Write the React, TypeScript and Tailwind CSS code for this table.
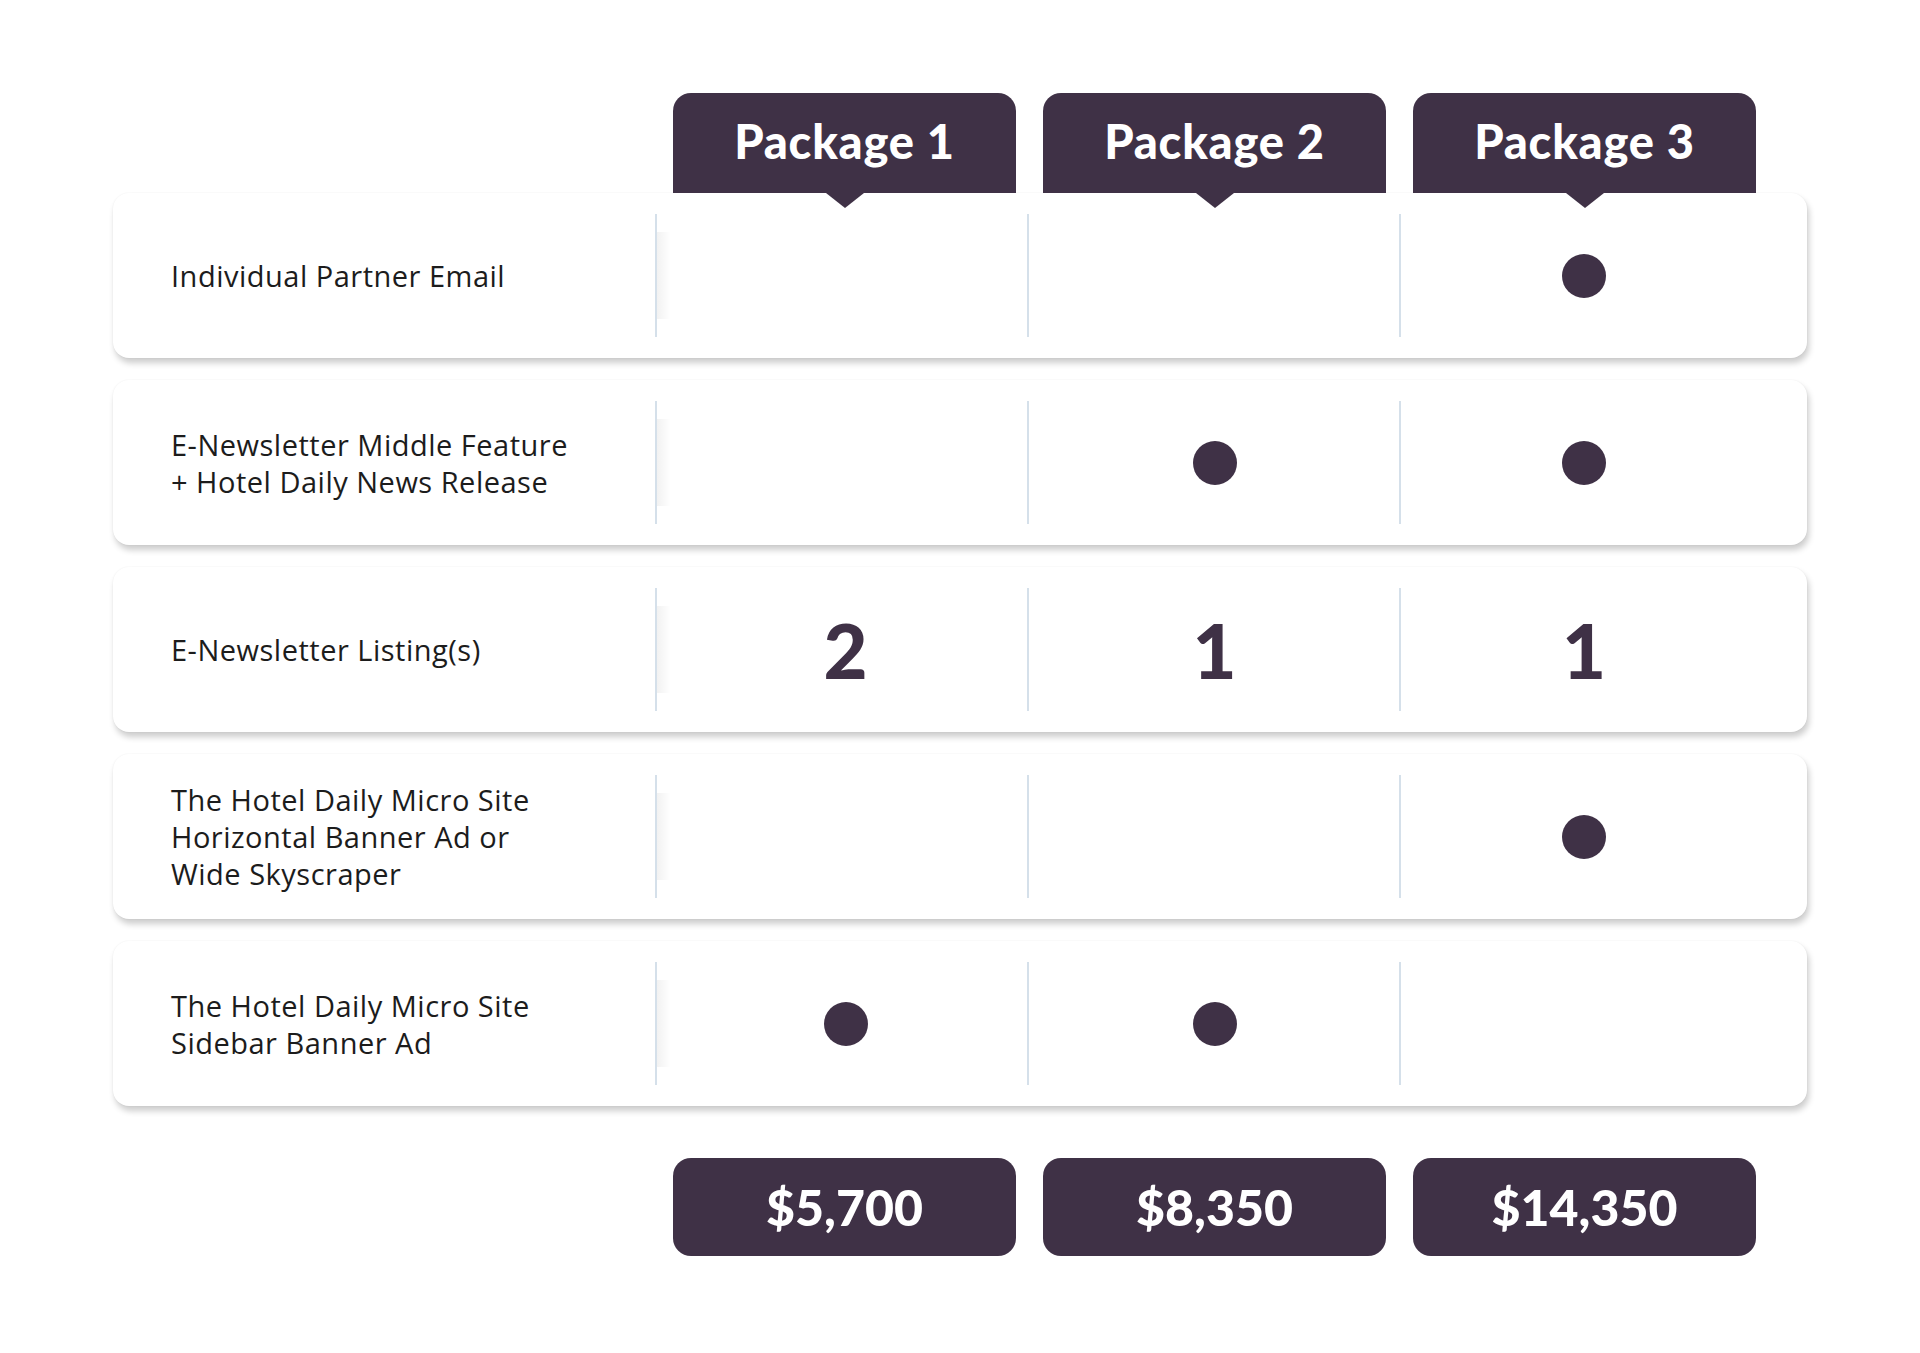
const packages = ["Package 1", "Package 2", "Package 3"]

const prices = ["$5,700", "$8,350", "$14,350"]

type Cell = "dot" | "" | string

const rows: { label: string[]; cells: Cell[] }[] = [
  { label: ["Individual Partner Email"], cells: ["", "", "dot"] },
  { label: ["E-Newsletter Middle Feature", "+ Hotel Daily News Release"], cells: ["", "dot", "dot"] },
  { label: ["E-Newsletter Listing(s)"], cells: ["2", "1", "1"] },
  { label: ["The Hotel Daily Micro Site", "Horizontal Banner Ad or", "Wide Skyscraper"], cells: ["", "", "dot"] },
  { label: ["The Hotel Daily Micro Site", "Sidebar Banner Ad"], cells: ["dot", "dot", ""] },
]

// small nudges so the marks sit under the tab centres
const colPad = ["pl-[7px]", "pl-[1px]", "pr-[4px]"]

function CellContent({ value }: { value: Cell }) {
  if (value === "dot") return <span className="block h-[44px] w-[44px] rounded-full bg-[#3f3146]" />
  if (value === "") return null
  return <span className="text-[76px] font-black leading-none text-[#3f3146]">{value}</span>
}

export default function App() {
  return (
    <div className="min-h-[1353px] w-full bg-white font-['Lato',sans-serif]">
      <div className="ml-[113px] w-[1694px] pt-[93px]">
        {/* package tabs */}
        <div className="ml-[560px] flex gap-[27px]">
          {packages.map((p) => (
            <div
              key={p}
              className="relative flex h-[100px] w-[343px] items-center justify-center rounded-t-[18px] bg-[#3f3146] pb-[4px]"
            >
              <span className="text-[47px] font-black tracking-[0.8px] text-white">{p}</span>
              <span className="absolute left-1/2 top-full z-10 -ml-[19px] h-0 w-0 border-l-[19px] border-r-[19px] border-t-[15px] border-l-transparent border-r-transparent border-t-[#3f3146]" />
            </div>
          ))}
        </div>

        {/* feature rows */}
        <div className="flex flex-col gap-[22px]">
          {rows.map((row, i) => (
            <div
              key={i}
              className="grid h-[165px] grid-cols-[542px_372px_372px_372px] rounded-[16px] bg-white shadow-[2px_5px_6px_rgba(0,0,0,0.2),0_0_2px_rgba(0,0,0,0.06)]"
            >
              <div className="flex flex-col justify-center pl-[58px] font-['Open_Sans',sans-serif] text-[29px] leading-[37px] tracking-[0.5px] text-[#1c1c1c]">
                {row.label.map((l) => (
                  <span key={l}>{l}</span>
                ))}
              </div>
              {row.cells.map((c, j) => (
                <div
                  key={j}
                  className={`relative my-[21px] flex items-center justify-center border-l-2 border-[#d5e0ea] ${colPad[j]}`}
                >
                  {j === 0 && (
                    <span className="absolute left-0 top-[15%] h-[70%] w-[14px] bg-gradient-to-r from-[rgba(0,0,0,0.05)] to-transparent" />
                  )}
                  <CellContent value={c} />
                </div>
              ))}
            </div>
          ))}
        </div>

        {/* prices */}
        <div className="ml-[560px] mt-[52px] flex gap-[27px]">
          {prices.map((p) => (
            <div key={p} className="flex h-[98px] w-[343px] items-center justify-center rounded-[18px] bg-[#3f3146]">
              <span className="text-[50px] font-black text-white">{p}</span>
            </div>
          ))}
        </div>
      </div>
    </div>
  )
}
